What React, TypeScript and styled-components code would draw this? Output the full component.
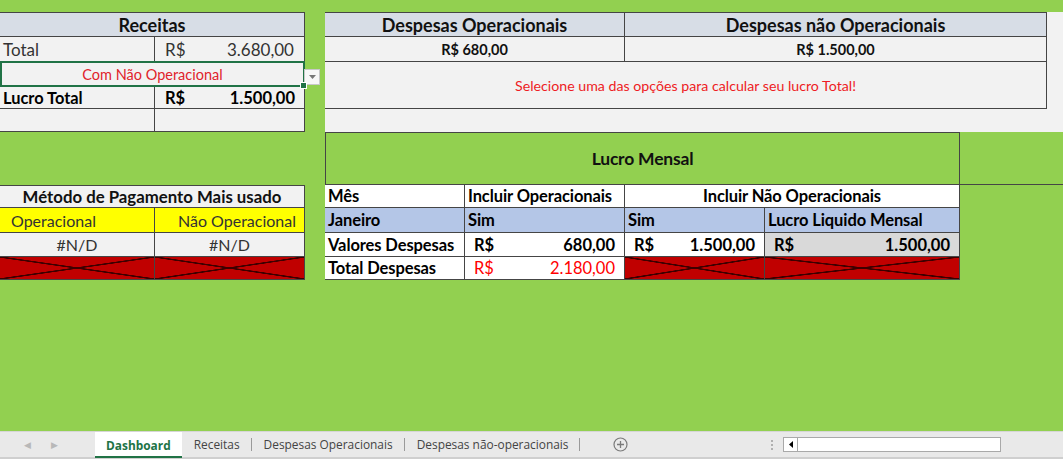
import React from 'react';
import styled, { createGlobalStyle, css } from 'styled-components';

const GlobalStyle = createGlobalStyle`
  html, body {
    margin: 0;
    padding: 0;
    background: #92d050;
    overflow: hidden;
  }
  body {
    font-family: Lato, "Open Sans", sans-serif;
  }
`;

const LINE = '#454545';
const GRAY = '#f2f2f2';
const GREEN = '#92d050';

const Page = styled.div`
  width: 1063px;
  height: 459px;
  display: flex;
  flex-direction: column;
`;

const Sheet = styled.div`
  display: grid;
  grid-template-columns: 155px 150px 20px 140px 160px 140px 195px 87px 16px;
  grid-template-rows: 12px 25px 25px 25px 22px 23px 53px 23px 25px 24px 23px 151px;
  background: ${GREEN};
`;

interface CellProps {
  $area: string;
  $bg?: string;
  $top?: boolean;
  $noRight?: boolean;
  $noBottom?: boolean;
}

const cellBase = css<CellProps>`
  grid-area: ${(p) => p.$area};
  background: ${(p) => p.$bg ?? GRAY};
  border-right: ${(p) => (p.$noRight ? 'none' : `1px solid ${LINE}`)};
  border-bottom: ${(p) => (p.$noBottom ? 'none' : `1px solid ${LINE}`)};
  border-top: ${(p) => (p.$top ? `1px solid ${LINE}` : 'none')};
  box-sizing: border-box;
  display: flex;
  align-items: center;
  min-width: 0;
  overflow: visible;
  white-space: nowrap;
`;

const TitleCell = styled.div<CellProps & { $size?: number }>`
  ${cellBase};
  justify-content: center;
  font-weight: 700;
  font-size: ${(p) => p.$size ?? 18}px;
  color: #111;
`;

const SubTitleCell = styled.div<CellProps & { $center?: boolean }>`
  ${cellBase};
  justify-content: ${(p) => (p.$center ? 'center' : 'flex-start')};
  padding: 0 3px;
  font-weight: 700;
  font-size: 16.5px;
  letter-spacing: -0.1px;
  color: #000;
`;

const TextCell = styled.div<CellProps & { $justify?: string; $weight?: number; $size?: number; $color?: string; $pad?: string }>`
  ${cellBase};
  justify-content: ${(p) => p.$justify ?? 'flex-start'};
  padding: ${(p) => p.$pad ?? '0 3px'};
  font-weight: ${(p) => p.$weight ?? 400};
  font-size: ${(p) => p.$size ?? 16}px;
  color: ${(p) => p.$color ?? '#222'};
`;

const MoneyCell = styled.div<CellProps & { $weight?: number; $size?: number; $color?: string; $pad?: string }>`
  ${cellBase};
  justify-content: space-between;
  padding: ${(p) => p.$pad ?? '0 9px 0 9px'};
  font-weight: ${(p) => p.$weight ?? 700};
  font-size: ${(p) => p.$size ?? 16.5}px;
  color: ${(p) => p.$color ?? '#000'};
`;

const NoteCell = styled.div<CellProps>`
  ${cellBase};
  justify-content: center;
  font-size: 14.2px;
  color: #ee1c24;
`;

const SelectCell = styled.div<CellProps>`
  ${cellBase};
  position: relative;
  justify-content: center;
  border: 2px solid #217346;
  margin-top: -1px;
  font-size: 14.5px;
  color: #e0232b;
`;

const DropButton = styled.div`
  position: absolute;
  right: -17px;
  top: 6px;
  width: 14px;
  height: 14px;
  background: #f7f7f7;
  border: 1px solid #c8c8c8;
  display: flex;
  align-items: center;
  justify-content: center;
`;

const Handle = styled.div`
  position: absolute;
  right: -4px;
  bottom: -4px;
  width: 5px;
  height: 5px;
  background: #217346;
  border: 1px solid #fff;
`;

const CrossedCell = styled.div<CellProps>`
  ${cellBase};
  background:
    linear-gradient(to top right, transparent calc(50% - 1px), #3d0000 calc(50% - 0.5px), #3d0000 calc(50% + 0.5px), transparent calc(50% + 1px)),
    linear-gradient(to bottom right, transparent calc(50% - 1px), #3d0000 calc(50% - 0.5px), #3d0000 calc(50% + 0.5px), transparent calc(50% + 1px)),
    #c00000;
`;

const Fill = styled.div<{ $area: string; $bg?: string; $line?: boolean }>`
  grid-area: ${(p) => p.$area};
  background: ${(p) => p.$bg ?? GRAY};
  border-bottom: ${(p) => (p.$line ? `1px solid ${LINE}` : 'none')};
  box-sizing: border-box;
`;

const MensalCell = styled(TitleCell)`
  border-left: 1px solid ${LINE};
  letter-spacing: -0.2px;
`;

const TabBar = styled.div`
  height: 28px;
  display: flex;
  align-items: stretch;
  background: #e9e9e9;
  border-top: 1px solid #d6d6d6;
  border-bottom: 2px solid #cfcfcf;
  box-sizing: border-box;
  font-family: "Open Sans", "Noto Sans", sans-serif;
  font-size: 11.9px;
  color: #444;
`;

const NavArrows = styled.div`
  width: 95px;
  display: flex;
  align-items: center;
  padding-left: 24px;
  gap: 20px;
  box-sizing: border-box;
  color: #b8b8b8;
  font-size: 9px;
`;

const Tab = styled.div<{ $active?: boolean }>`
  position: relative;
  display: flex;
  align-items: center;
  padding: 0 12px 1px;
  ${(p) =>
    p.$active
      ? css`
          background: #fff;
          color: #217346;
          font-weight: 700;
          padding: 0 11px 1px;
          box-shadow: inset 0 -2px 0 #217346;
          margin-bottom: -1px;
        `
      : css`
          &::after {
            content: '';
            position: absolute;
            right: 0;
            top: 6px;
            bottom: 6px;
            width: 1px;
            background: #9a9a9a;
          }
        `}
`;

const AddArea = styled.div`
  width: 180px;
  display: flex;
  align-items: center;
  padding-left: 33px;
  box-sizing: border-box;
`;

const Dots = styled.div`
  width: 23px;
  display: flex;
  flex-direction: column;
  align-items: center;
  justify-content: center;
  gap: 2px;
  & span {
    width: 2px;
    height: 2px;
    background: #b0b0b0;
  }
`;

const Scroll = styled.div`
  margin-top: 5px;
  width: 218px;
  height: 15px;
  background: #fff;
  border: 1px solid #a9a9a9;
  box-sizing: border-box;
  display: flex;
`;

const ScrollBtn = styled.div`
  width: 13px;
  border-right: 1px solid #a9a9a9;
  display: flex;
  align-items: center;
  justify-content: center;
`;

const tabs = ['Dashboard', 'Receitas', 'Despesas Operacionais', 'Despesas não-operacionais'];

export default function App() {
  return (
    <Page>
      <GlobalStyle />
      <Sheet>
        {/* left: receitas */}
        <TitleCell $area="2 / 1 / 3 / 3" $bg="#d7dde6" $top>Receitas</TitleCell>
        <TextCell $area="3 / 1 / 4 / 2" $size={17} $color="#333">Total</TextCell>
        <MoneyCell $area="3 / 2 / 4 / 3" $weight={400} $size={17} $color="#333" $pad="0 10px 0 10px">
          <span>R$</span>
          <span>3.680,00</span>
        </MoneyCell>
        <SelectCell $area="4 / 1 / 5 / 3">
          Com Não Operacional
          <DropButton>
            <svg width="7" height="4" viewBox="0 0 7 4">
              <path d="M0 0h7L3.5 4z" fill="#777" />
            </svg>
          </DropButton>
          <Handle />
        </SelectCell>
        <TextCell $area="5 / 1 / 6 / 2" $weight={700} $size={16.4} $color="#000">Lucro Total</TextCell>
        <MoneyCell $area="5 / 2 / 6 / 3" $pad="0 9px 0 10px">
          <span>R$</span>
          <span>1.500,00</span>
        </MoneyCell>
        <TextCell $area="6 / 1 / 7 / 2" />
        <TextCell $area="6 / 2 / 7 / 3" />

        {/* left: método de pagamento */}
        <TitleCell $area="8 / 1 / 9 / 3" $top $size={16.8}>Método de Pagamento Mais usado</TitleCell>
        <TextCell $area="9 / 1 / 10 / 2" $bg="#ffff00" $pad="0 0 0 11px" $color="#333">Operacional</TextCell>
        <TextCell $area="9 / 2 / 10 / 3" $bg="#ffff00" $justify="flex-end" $pad="0 8px 0 0" $color="#333">Não Operacional</TextCell>
        <TextCell $area="10 / 1 / 11 / 2" $justify="center" $color="#333">#N/D</TextCell>
        <TextCell $area="10 / 2 / 11 / 3" $justify="center" $color="#333">#N/D</TextCell>
        <CrossedCell $area="11 / 1 / 12 / 2" />
        <CrossedCell $area="11 / 2 / 12 / 3" />

        {/* right: despesas */}
        <TitleCell $area="2 / 4 / 3 / 6" $bg="#d7dde6" $top>Despesas Operacionais</TitleCell>
        <TitleCell $area="2 / 6 / 3 / 9" $bg="#d7dde6" $top>Despesas não Operacionais</TitleCell>
        <Fill $area="2 / 9 / 7 / 10" />
        <TitleCell $area="3 / 4 / 4 / 6" $size={14.5}>R$ 680,00</TitleCell>
        <TitleCell $area="3 / 6 / 4 / 9" $size={14.5}>R$ 1.500,00</TitleCell>
        <NoteCell $area="4 / 4 / 6 / 9">Selecione uma das opções para calcular seu lucro Total!</NoteCell>
        <Fill $area="6 / 4 / 7 / 9" />

        {/* right: lucro mensal */}
        <MensalCell $area="7 / 4 / 8 / 8" $bg={GREEN} $top $size={17.5}>
          Lucro Mensal
        </MensalCell>
        <Fill $area="7 / 8 / 8 / 10" $bg={GREEN} $line />
        <SubTitleCell $area="8 / 4 / 9 / 5" $bg="#fff">Mês</SubTitleCell>
        <SubTitleCell $area="8 / 5 / 9 / 6" $bg="#fff">Incluir Operacionais</SubTitleCell>
        <SubTitleCell $area="8 / 6 / 9 / 8" $bg="#fff" $center>Incluir Não Operacionais</SubTitleCell>
        <SubTitleCell $area="9 / 4 / 10 / 5" $bg="#b4c6e7">Janeiro</SubTitleCell>
        <SubTitleCell $area="9 / 5 / 10 / 6" $bg="#b4c6e7">Sim</SubTitleCell>
        <SubTitleCell $area="9 / 6 / 10 / 7" $bg="#b4c6e7">Sim</SubTitleCell>
        <SubTitleCell $area="9 / 7 / 10 / 8" $bg="#b4c6e7">Lucro Liquido Mensal</SubTitleCell>
        <SubTitleCell $area="10 / 4 / 11 / 5" $bg="#fff">Valores Despesas</SubTitleCell>
        <MoneyCell $area="10 / 5 / 11 / 6" $bg="#fff">
          <span>R$</span>
          <span>680,00</span>
        </MoneyCell>
        <MoneyCell $area="10 / 6 / 11 / 7" $bg="#fff">
          <span>R$</span>
          <span>1.500,00</span>
        </MoneyCell>
        <MoneyCell $area="10 / 7 / 11 / 8" $bg="#d9d9d9">
          <span>R$</span>
          <span>1.500,00</span>
        </MoneyCell>
        <SubTitleCell $area="11 / 4 / 12 / 5" $bg="#fff">Total Despesas</SubTitleCell>
        <MoneyCell $area="11 / 5 / 12 / 6" $bg="#fff" $weight={400} $color="#ff0000">
          <span>R$</span>
          <span>2.180,00</span>
        </MoneyCell>
        <CrossedCell $area="11 / 6 / 12 / 7" />
        <CrossedCell $area="11 / 7 / 12 / 8" />
      </Sheet>

      <TabBar>
        <NavArrows>
          <span>◀</span>
          <span>▶</span>
        </NavArrows>
        {tabs.map((t, i) => (
          <Tab key={t} $active={i === 0}>
            {t}
          </Tab>
        ))}
        <AddArea>
          <svg width="15" height="15" viewBox="0 0 15 15">
            <circle cx="7.5" cy="7.5" r="6.5" fill="none" stroke="#7a7a7a" strokeWidth="1.2" />
            <path d="M7.5 4v7M4 7.5h7" stroke="#7a7a7a" strokeWidth="1.3" />
          </svg>
        </AddArea>
        <Dots>
          <span />
          <span />
          <span />
        </Dots>
        <Scroll>
          <ScrollBtn>
            <svg width="4" height="7" viewBox="0 0 4 7">
              <path d="M4 0v7L0 3.5z" fill="#000" />
            </svg>
          </ScrollBtn>
        </Scroll>
      </TabBar>
    </Page>
  );
}
